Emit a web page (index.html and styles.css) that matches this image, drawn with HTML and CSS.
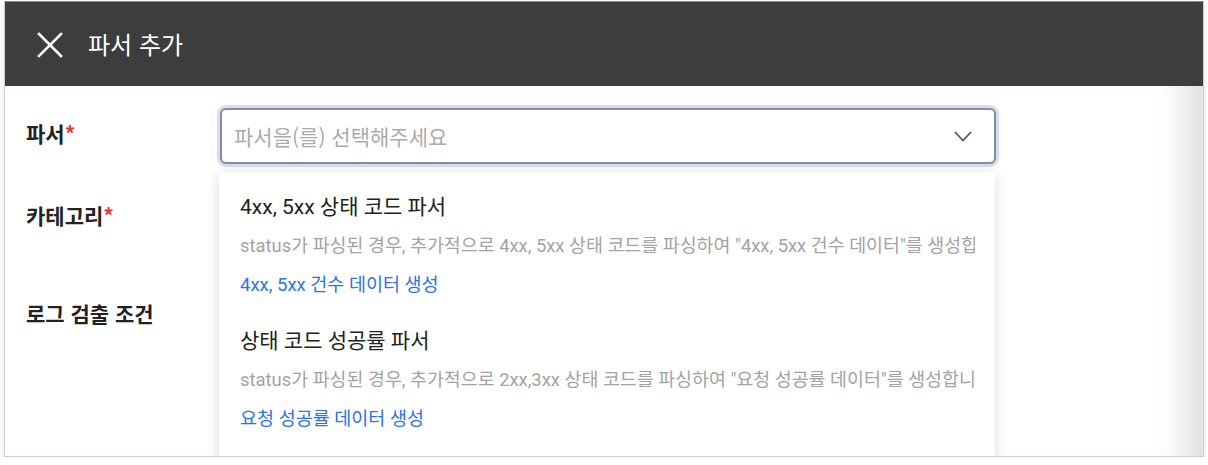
FILE: index.html
```html
<!DOCTYPE html>
<html lang="ko">
<head>
<meta charset="utf-8">
<title>파서 추가</title>
<link rel="stylesheet" href="styles.css">
</head>
<body>
<div class="panel">
  <header class="header">
    <svg class="close" width="26" height="26" viewBox="0 0 26 26" aria-hidden="true">
      <path d="M2 2 L24 24 M24 2 L2 24" stroke="#fff" stroke-width="2.6" stroke-linecap="square" fill="none"/>
    </svg>
    <h1 class="title">파서 추가</h1>
  </header>
  <div class="content">
    <div class="row row-parser">
      <div class="label">파서<span class="req">*</span></div>
      <div class="field">
        <div class="select">
          <span class="placeholder">파서을(를) 선택해주세요</span>
          <svg class="chevron" width="18" height="11" viewBox="0 0 18 11" aria-hidden="true">
            <path d="M1 1 L9 9.5 L17 1" stroke="#555" stroke-width="1.8" fill="none"/>
          </svg>
        </div>
        <div class="dropdown">
          <div class="option">
            <div class="opt-title">4xx, 5xx 상태 코드 파서</div>
            <div class="opt-desc">status가 파싱된 경우, 추가적으로 4xx, 5xx 상태 코드를 파싱하여 "4xx, 5xx 건수 데이터"를 생성합니다.</div>
            <div class="opt-link">4xx, 5xx 건수 데이터 생성</div>
          </div>
          <div class="option">
            <div class="opt-title">상태 코드 성공률 파서</div>
            <div class="opt-desc">status가 파싱된 경우, 추가적으로 2xx,3xx 상태 코드를 파싱하여 "요청 성공률 데이터"를 생성합니다.</div>
            <div class="opt-link">요청 성공률 데이터 생성</div>
          </div>
        </div>
      </div>
    </div>
    <div class="row row-category">
      <div class="label">카테고리<span class="req">*</span></div>
    </div>
    <div class="row row-condition">
      <div class="label">로그 검출 조건</div>
    </div>
  </div>
</div>
</body>
</html>
```

FILE: styles.css
```css
* { box-sizing: border-box; }
html, body { margin: 0; padding: 0; background: #ffffff; }
body {
  padding: 1px 4px 0 4px;
  font-family: Roboto, "Noto Sans CJK KR", sans-serif;
}
.panel {
  height: 456px;
  border: 1px solid #cfcfcf;
  border-top-color: #8a8a8a;
  background: #fff;
  overflow: hidden;
  box-shadow: 0 3px 6px rgba(0,0,0,0.12);
  display: flex;
  flex-direction: column;
}
.header {
  height: 84px;
  flex: none;
  background: #3d3d3d;
  display: flex;
  align-items: center;
  padding-left: 32px;
}
.close { display: block; margin-top: 1px; }
.title {
  margin: 0 0 0 25px;
  color: #fff;
  font-family: "Noto Sans CJK KR", sans-serif;
  font-size: 24px;
  font-weight: 400;
  line-height: 30px;
}
.content {
  flex: 1;
  padding: 22px 0 0 21px;
  box-shadow: inset -40px 0 30px -22px rgba(0,0,0,0.13);
}
.row { display: flex; }
.label {
  width: 194px;
  flex: none;
  font-family: "Noto Sans CJK KR", sans-serif;
  font-size: 21px;
  font-weight: 700;
  color: #222;
  line-height: 24px;
}
.req { color: #e53935; }
.row-parser .label { padding-top: 13px; }
.row-category { margin-top: 39px; }
.row-condition { margin-top: 74px; }
.field { position: relative; width: 776px; }
.select {
  height: 56px;
  border: 2px solid #8c8c8c;
  border-radius: 6px;
  box-shadow: 0 0 0 3px #cfdcfa;
  display: flex;
  align-items: center;
  justify-content: space-between;
  padding: 0 22px 0 12px;
  background: #fff;
}
.placeholder {
  font-family: "Noto Sans CJK KR", sans-serif;
  font-size: 21px;
  color: #ababab;
  line-height: 26px;
}
.chevron { display: block; }
.dropdown {
  position: absolute;
  top: 64px;
  left: -1px;
  width: 776px;
  height: 300px;
  background: #fff;
  border-radius: 4px;
  box-shadow: 0 2px 14px rgba(0,0,0,0.14);
  padding: 0 20px 0 21px;
}
.option { padding: 22px 0 10px; }
.opt-title {
  font-size: 21px;
  line-height: 26px;
  color: #222;
}
.opt-desc {
  margin-top: 15px;
  font-size: 18.4px;
  line-height: 22px;
  color: #a3a3a3;
  white-space: nowrap;
  overflow: hidden;
}
.opt-link {
  margin-top: 17px;
  font-size: 18.5px;
  line-height: 22px;
  color: #2b73e6;
}
```
